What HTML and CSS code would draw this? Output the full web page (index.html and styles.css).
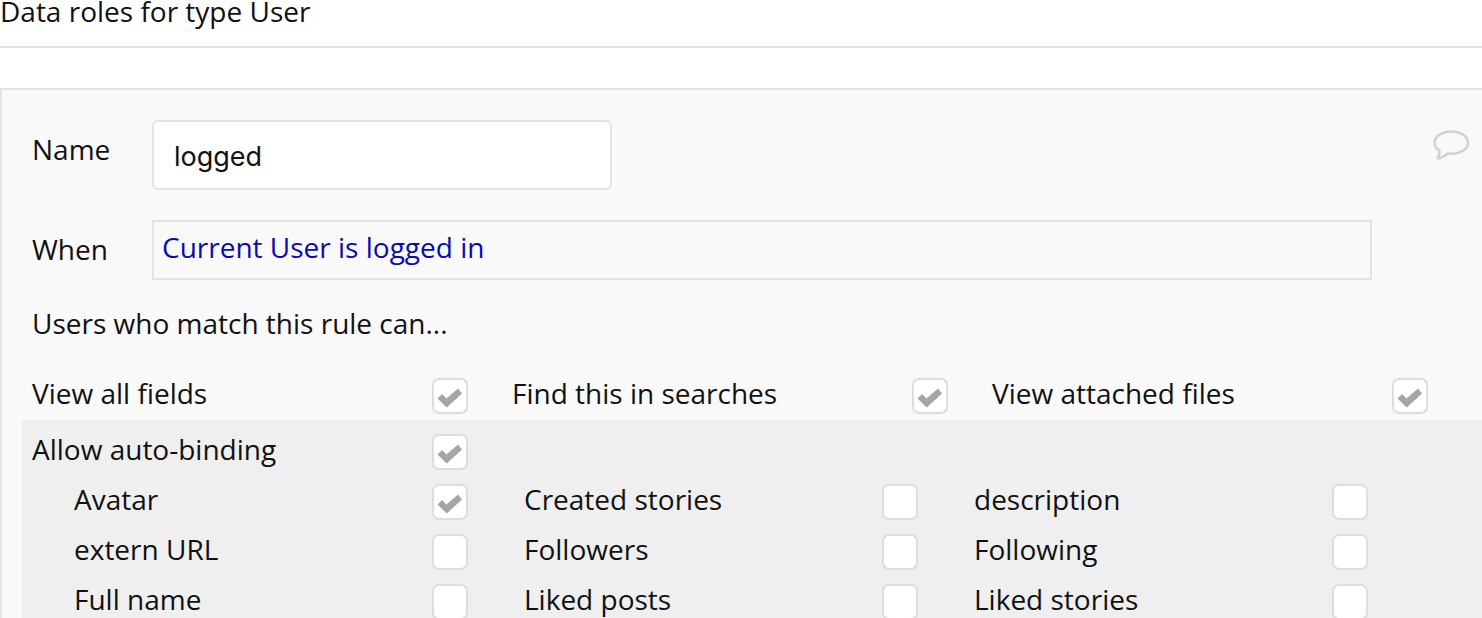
FILE: index.html
```html
<!DOCTYPE html>
<html lang="en">
<head>
<meta charset="utf-8">
<title>Data roles</title>
<link rel="stylesheet" href="styles.css">
</head>
<body>
<h1 class="title">Data roles for type User</h1>
<section class="panel">
  <svg class="bubble" width="38" height="34" viewBox="0 0 38 34"><path d="M19.500 2.500C10 2.500 2.500 7.500 2.500 13.700c0 3.100 2 5.900 5 7.800.3 2.900-.6 5.900-2 8 3.600-.5 7.700-2.800 10.300-5 1.200.2 2.500.3 3.700.3 9.300 0 16.500-5 16.500-11.100S28.800 2.500 19.500 2.500z" fill="none" stroke="#ced3d3" stroke-width="2.600" stroke-linejoin="round"/></svg>
  <div class="name-row">
    <span class="name-label">Name</span>
    <div class="name-input">logged</div>
  </div>
  <div class="when-row">
    <span class="when-label">When</span>
    <div class="when-input">Current User is logged in</div>
  </div>
  <p class="intro">Users who match this rule can...</p>
  <div class="perm-row">
    <div class="perm"><span>View all fields</span><i class="box on"><svg viewBox="0 0 32 32"><use href="#tick"/></svg></i></div>
    <div class="perm"><span>Find this in searches</span><i class="box on"><svg viewBox="0 0 32 32"><use href="#tick"/></svg></i></div>
    <div class="perm"><span>View attached files</span><i class="box on"><svg viewBox="0 0 32 32"><use href="#tick"/></svg></i></div>
  </div>
  <div class="binding">
    <div class="bind-head"><span>Allow auto-binding</span><i class="box on"><svg viewBox="0 0 32 32"><use href="#tick"/></svg></i></div>
    <div class="fields">
      <div class="field"><span>Avatar</span><i class="box on"><svg viewBox="0 0 32 32"><use href="#tick"/></svg></i></div>
      <div class="field"><span>Created stories</span><i class="box"></i></div>
      <div class="field"><span>description</span><i class="box"></i></div>
      <div class="field"><span>extern URL</span><i class="box"></i></div>
      <div class="field"><span>Followers</span><i class="box"></i></div>
      <div class="field"><span>Following</span><i class="box"></i></div>
      <div class="field"><span>Full name</span><i class="box"></i></div>
      <div class="field"><span>Liked posts</span><i class="box"></i></div>
      <div class="field"><span>Liked stories</span><i class="box"></i></div>
    </div>
  </div>
</section>
<svg class="defs" width="0" height="0"><defs><path id="tick" d="M3.500 18.500L8 14l4.500 4.500L24 8.500l4 5L12.800 27.500z" fill="#a1a6a6"/></defs></svg>
</body>
</html>
```
FILE: styles.css
```css
html, body { margin: 0; padding: 0; height: 618px; overflow: hidden; background: #fff; }
body { font-family: "Open Sans", sans-serif; font-size: 28px; color: #111; }
.title { margin: 0; height: 46px; line-height: 22px; font-size: 28px; font-weight: 400; border-bottom: 2px solid #e3e3e3; }
.panel { position: relative; box-sizing: border-box; margin-top: 40px; height: 530px; padding: 30px 0 0 20px; background: #f9f9f9; border: 2px solid #e3e3e3; border-right: 0; border-bottom: 0; }
.bubble { position: absolute; right: 12px; top: 39px; }
.name-row { display: flex; height: 70px; }
.name-label { width: 120px; padding-left: 10px; line-height: 58px; }
.name-input { box-sizing: border-box; width: 460px; height: 70px; padding-left: 20px; line-height: 70px; background: #fff; border: 2px solid #e3e3e3; border-radius: 6px; font-family: "Inter", sans-serif; font-size: 27px; }
.when-row { display: flex; height: 60px; margin-top: 30px; }
.when-label { width: 120px; padding-left: 10px; line-height: 58px; }
.when-input { box-sizing: border-box; width: 1220px; height: 60px; padding-left: 8px; line-height: 50px; background: #f9f9f9; border: 2px solid #e3e3e3; color: #0a0ab4; }
.intro { margin: 23px 0 0; padding-left: 10px; height: 40px; line-height: 40px; }
.perm-row { display: flex; height: 42px; margin-top: 35px; padding-left: 10px; }
.perm { display: flex; width: 480px; height: 36px; line-height: 30px; justify-content: space-between; box-sizing: border-box; padding-right: 44px; }
.binding { background: #efefef; height: 198px; overflow: hidden; padding: 10px 0 0 10px; }
.bind-head { display: flex; justify-content: space-between; width: 436px; height: 50px; line-height: 38px; }
.bind-head .box { margin-top: 4px; }
.fields { display: grid; grid-template-columns: repeat(3, 450px); grid-auto-rows: 50px; }
.field { display: flex; justify-content: space-between; box-sizing: border-box; padding: 0 14px 0 42px; line-height: 38px; }
.field .box { margin-top: 4px; }
.box { box-sizing: border-box; display: block; flex: none; width: 36px; height: 36px; background: #fff; border: 2px solid #ddd; border-radius: 7px; }
.box svg { display: block; width: 32px; height: 32px; }
.defs { position: absolute; }
```
